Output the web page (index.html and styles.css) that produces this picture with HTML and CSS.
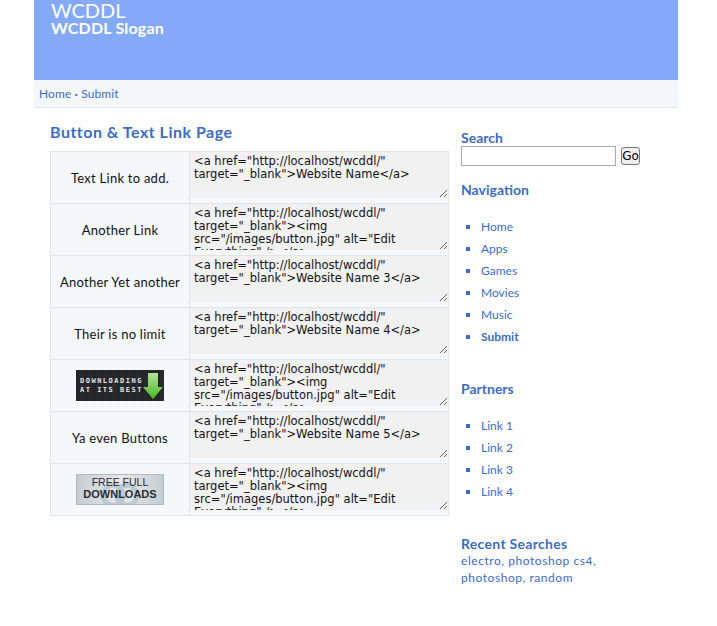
FILE: index.html
```html
<!DOCTYPE html>
<html lang="en">
<head>
    <meta charset="UTF-8">
    <title>Button &amp; Text Link Page</title>
    <link rel="stylesheet" href="styles.css">
</head>
<body>
<div class="wrap">
    <div class="header">
        <div class="site_name">WCDDL</div>
        <div class="slogan">WCDDL Slogan</div>
    </div>
    <div class="topnav">
        <a href="#">Home</a> <span class="dot">·</span> <a href="#">Submit</a>
    </div>
    <div class="content">
        <div class="main">
            <h1>Button &amp; Text Link Page</h1>
            <table class="links">
                <tr>
                    <td class="label">Text Link to add.</td>
                    <td class="code"><textarea readonly>&lt;a href="http://localhost/wcddl/" target="_blank"&gt;Website Name&lt;/a&gt;</textarea></td>
                </tr>
                <tr>
                    <td class="label">Another Link</td>
                    <td class="code"><textarea readonly>&lt;a href="http://localhost/wcddl/" target="_blank"&gt;&lt;img src="/images/button.jpg" alt="Edit Everything" /&gt;&lt;/a&gt;</textarea></td>
                </tr>
                <tr>
                    <td class="label">Another Yet another</td>
                    <td class="code"><textarea readonly>&lt;a href="http://localhost/wcddl/" target="_blank"&gt;Website Name 3&lt;/a&gt;</textarea></td>
                </tr>
                <tr>
                    <td class="label">Their is no limit</td>
                    <td class="code"><textarea readonly>&lt;a href="http://localhost/wcddl/" target="_blank"&gt;Website Name 4&lt;/a&gt;</textarea></td>
                </tr>
                <tr>
                    <td class="label">
                        <div class="btn btn_dark">
                            <span class="btn_text">DOWNLOADING<br>AT ITS BEST</span>
                            <svg class="arrow" width="20" height="28" viewBox="0 0 20 28">
                                <defs>
                                    <linearGradient id="green" x1="0" y1="0" x2="0" y2="1">
                                        <stop offset="0" stop-color="#b5e29c"/>
                                        <stop offset="1" stop-color="#46b81e"/>
                                    </linearGradient>
                                </defs>
                                <path d="M5 1h10v14h5L10 27 0 15h5z" fill="url(#green)"/>
                            </svg>
                        </div>
                    </td>
                    <td class="code"><textarea readonly>&lt;a href="http://localhost/wcddl/" target="_blank"&gt;&lt;img src="/images/button.jpg" alt="Edit Everything" /&gt;&lt;/a&gt;</textarea></td>
                </tr>
                <tr>
                    <td class="label">Ya even Buttons</td>
                    <td class="code"><textarea readonly>&lt;a href="http://localhost/wcddl/" target="_blank"&gt;Website Name 5&lt;/a&gt;</textarea></td>
                </tr>
                <tr>
                    <td class="label">
                        <div class="btn btn_light">FREE FULL<br><b>DOWNLOADS</b></div>
                    </td>
                    <td class="code"><textarea readonly>&lt;a href="http://localhost/wcddl/" target="_blank"&gt;&lt;img src="/images/button.jpg" alt="Edit Everything" /&gt;&lt;/a&gt;</textarea></td>
                </tr>
            </table>
        </div>
        <div class="side">
            <h2 class="search_title">Search</h2>
            <div class="search">
                <input type="text" class="search_input">
                <button class="go">Go</button>
            </div>
            <h2 class="nav_title">Navigation</h2>
            <ul class="nav_list">
                <li><a href="#">Home</a></li>
                <li><a href="#">Apps</a></li>
                <li><a href="#">Games</a></li>
                <li><a href="#">Movies</a></li>
                <li><a href="#">Music</a></li>
                <li><a href="#"><b>Submit</b></a></li>
            </ul>
            <h2 class="partners_title">Partners</h2>
            <ul class="nav_list">
                <li><a href="#">Link 1</a></li>
                <li><a href="#">Link 2</a></li>
                <li><a href="#">Link 3</a></li>
                <li><a href="#">Link 4</a></li>
            </ul>
            <h2 class="recent_title">Recent Searches</h2>
            <p class="recent"><a href="#">electro</a>, <a href="#">photoshop cs4</a>, <a href="#">photoshop</a>, <a href="#">random</a></p>
        </div>
    </div>
</div>
</body>
</html>
```

FILE: styles.css
```css
* {
    margin: 0;
    padding: 0;
}

body {
    background: #fff;
    font-family: "Lato", "Noto Sans", sans-serif;
    font-size: 13px;
    color: #111;
}

a {
    color: #3d6cc0;
    text-decoration: none;
}

.wrap {
    width: 644px;
    margin-left: 34px;
}

.header {
    height: 80px;
    box-sizing: border-box;
    padding-left: 17px;
    background: #84a9f7;
    color: #fff;
    overflow: hidden;
}

.site_name {
    font-size: 20px;
    line-height: 20px;
}

.slogan {
    font-size: 16px;
    line-height: 16px;
    font-weight: bold;
    letter-spacing: 0.2px;
}

.topnav {
    height: 27px;
    line-height: 27px;
    padding-left: 5px;
    background: #f5f8fb;
    border-bottom: 1px solid #e2e4e6;
    font-size: 12px;
    letter-spacing: 0.1px;
}

.dot {
    color: #3d6cc0;
    font-weight: bold;
}

.content {
    display: flex;
    padding-left: 16px;
}

.main {
    width: 399px;
    margin-top: 14px;
}

h1 {
    font-size: 16px;
    line-height: 20px;
    letter-spacing: 0.5px;
    color: #3d6cc0;
    margin-bottom: 9px;
}

.links {
    width: 399px;
    border-collapse: collapse;
    table-layout: fixed;
    border: 1px solid #e2e4e6;
}

.links td {
    height: 51px;
    border: 1px solid #e2e4e6;
    background: #f5f8fb;
    vertical-align: top;
}

.links .label {
    width: 138px;
    text-align: center;
    vertical-align: middle;
    font-size: 13px;
    letter-spacing: 0.25px;
}

.code textarea {
    display: block;
    width: 100%;
    height: 46px;
    box-sizing: border-box;
    padding: 3px 4px 0;
    border: 0;
    outline: 0;
    overflow: hidden;
    background: #f1f1f1;
    color: #111;
    font-family: "DejaVu Sans", sans-serif;
    font-size: 11.5px;
    line-height: 13px;
}

.btn {
    width: 88px;
    height: 31px;
    margin: 0 auto;
    box-sizing: border-box;
    letter-spacing: 0;
}

.btn_dark {
    display: flex;
    align-items: center;
    justify-content: space-between;
    padding: 0 1px 0 4px;
    background: repeating-linear-gradient(90deg, #222427 0 4px, #272a2d 4px 8px);
    color: #e6e6e6;
    text-align: left;
}

.btn_text {
    font-family: "DejaVu Sans Mono", monospace;
    font-size: 7px;
    font-weight: bold;
    line-height: 9px;
    letter-spacing: 1.5px;
    white-space: nowrap;
}

.btn_light {
    padding-top: 1px;
    background:
        radial-gradient(circle at 42% 70%, transparent 7px, #bccad6 8px, #bccad6 12px, transparent 13px),
        radial-gradient(circle at 58% 70%, transparent 7px, #bccad6 8px, #bccad6 12px, transparent 13px),
        linear-gradient(90deg, #c6ced4, #e6e9eb 50%, #c6ced4);
    border: 1px solid #b5b9bb;
    color: #2c2c2c;
    text-align: center;
    font-family: "Liberation Sans", sans-serif;
    font-size: 10.5px;
    line-height: 12px;
}

.btn_light b {
    font-size: 11px;
}

.side {
    margin-left: 12px;
    width: 200px;
}

h2 {
    font-size: 14px;
    line-height: 18px;
    color: #3d6cc0;
}

.search_title {
    margin-top: 22px;
    line-height: 16px;
}

.search {
    display: flex;
    align-items: center;
    gap: 5px;
}

.search_input {
    width: 155px;
    height: 20px;
    box-sizing: border-box;
    border: 1px solid #a9a9a9;
    background: #fff;
}

.go {
    width: 19px;
    height: 18px;
    border: 1px solid #767676;
    border-radius: 3px;
    background: #efefef;
    color: #000;
    font-family: "DejaVu Sans", sans-serif;
    font-size: 12px;
    overflow: hidden;
}

.nav_title {
    margin-top: 15px;
}

.nav_list {
    margin-top: 17px;
    padding-left: 20px;
    list-style: square;
    color: #3d6cc0;
}

.nav_list li {
    line-height: 22px;
    height: 22px;
    font-size: 12px;
}

.partners_title {
    margin-top: 32px;
}

.recent_title {
    margin-top: 32px;
    letter-spacing: 0.3px;
}

.recent {
    width: 150px;
    font-size: 12px;
    line-height: 17px;
    letter-spacing: 0.55px;
    margin-top: -1px;
    color: #3d6cc0;
}
```
